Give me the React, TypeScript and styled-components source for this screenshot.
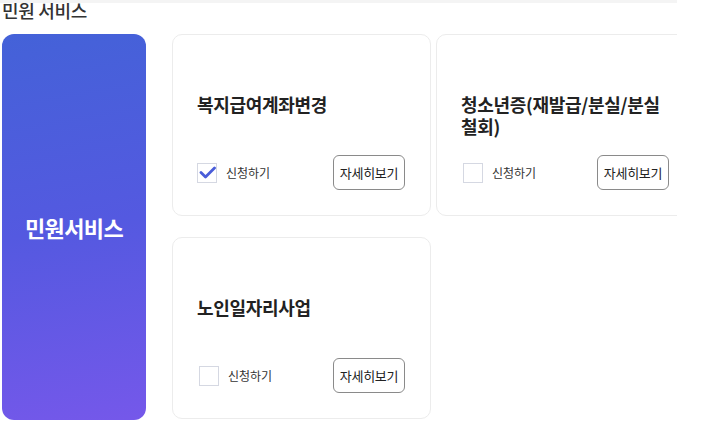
import * as React from 'react';
import styled, { createGlobalStyle } from 'styled-components';

const GlobalStyle = createGlobalStyle`
    html, body {
        margin: 0;
        padding: 0;
        background: #ffffff;
    }
    body {
        font-family: "Noto Sans CJK KR", "Noto Sans", sans-serif;
        color: #333333;
    }
`;

const Page = styled.div`
    width: 677px;
    height: 432px;
    overflow: hidden;
    border-top: 3px solid #f4f4f4;
    box-sizing: border-box;
`;

const Heading = styled.h2`
    margin: -4px 0 0 2px;
    font-size: 18px;
    line-height: 22px;
    font-weight: 500;
    color: #333333;
    letter-spacing: -0.3px;
`;

const Section = styled.div`
    display: flex;
    gap: 26px;
    margin-top: 13px;
    padding-left: 2px;
`;

const Sidebar = styled.div`
    flex: 0 0 144px;
    height: 386px;
    border-radius: 12px;
    background: linear-gradient(170deg, #4462d8 0%, #5459e0 50%, #7558ea 100%);
    display: flex;
    align-items: center;
    justify-content: center;
    color: #ffffff;
    font-size: 22px;
    font-weight: 700;
    letter-spacing: -0.6px;
`;

const CardGrid = styled.div`
    display: grid;
    grid-template-columns: repeat(2, 259px);
    grid-auto-rows: 182px;
    column-gap: 5px;
    row-gap: 21px;
    flex: 0 0 auto;
`;

const Card = styled.div`
    box-sizing: border-box;
    border: 1px solid #ececec;
    border-radius: 10px;
    padding: 58px 25px 25px 24px;
    display: flex;
    flex-direction: column;
    justify-content: space-between;
    background: #ffffff;
`;

const CardTitle = styled.h3`
    margin: 0;
    font-size: 18px;
    line-height: 22px;
    font-weight: 700;
    color: #222222;
    letter-spacing: -0.3px;
`;

const CardFooter = styled.div`
    display: flex;
    align-items: center;
    justify-content: space-between;
`;

const CheckLabel = styled.label<{ $offset?: number }>`
    display: flex;
    align-items: center;
    gap: 9px;
    margin-left: ${({ $offset }) => $offset ?? 0}px;
    font-size: 12px;
    color: #333333;
    cursor: pointer;
`;

const Box = styled.span`
    box-sizing: border-box;
    width: 20px;
    height: 20px;
    border: 1px solid #d5d8e2;
    background: #ffffff;
    display: flex;
    align-items: center;
    justify-content: center;
`;

const DetailButton = styled.button`
    box-sizing: border-box;
    width: 72px;
    height: 35px;
    border: 1px solid #8a8a8a;
    border-radius: 6px;
    background: #ffffff;
    font-family: inherit;
    font-size: 13px;
    color: #222222;
    letter-spacing: -0.3px;
    padding: 0;
    cursor: pointer;
`;

const CheckMark = () => (
    <svg width="17" height="14" viewBox="0 0 17 14" fill="none">
        <path d="M2 6.5 L6.5 11 L15.5 2" stroke="#4a5dd9" strokeWidth="2.8" strokeLinecap="round" strokeLinejoin="round" />
    </svg>
);

interface Service {
    title: string;
    checked: boolean;
    offset?: number;
}

const services: Service[] = [
    { title: '복지급여계좌변경', checked: true },
    { title: '청소년증(재발급/분실/분실 철회)', checked: false, offset: 2 },
    { title: '노인일자리사업', checked: false, offset: 2 },
];

const ServiceCard = ({ title, checked, offset }: Service) => (
    <Card>
        <CardTitle>{title}</CardTitle>
        <CardFooter>
            <CheckLabel $offset={offset}>
                <Box>{checked && <CheckMark />}</Box>
                신청하기
            </CheckLabel>
            <DetailButton>자세히보기</DetailButton>
        </CardFooter>
    </Card>
);

export default function App() {
    return (
        <>
            <GlobalStyle />
            <Page>
                <Heading>민원 서비스</Heading>
                <Section>
                    <Sidebar>민원서비스</Sidebar>
                    <CardGrid>
                        {services.map((s) => (
                            <ServiceCard key={s.title} {...s} />
                        ))}
                    </CardGrid>
                </Section>
            </Page>
        </>
    );
}
